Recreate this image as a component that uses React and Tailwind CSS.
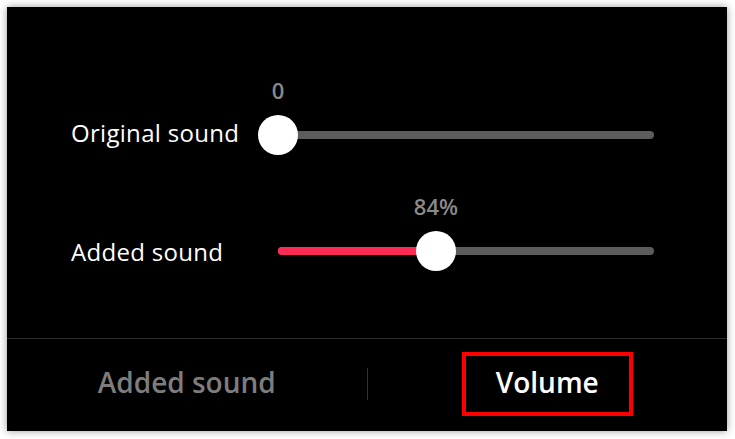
import React from "react";

const font = { fontFamily: '"Open Sans", "Liberation Sans", sans-serif' };

function Slider({ label, value, percent, color, lift }) {
  return (
    <div className="flex h-[40px] items-center">
      <div className={(lift ? "pb-[4px] " : "pt-[1px] ") + "w-[207px] text-[24px] leading-none tracking-[0.3px] text-white"}>
        {label}
      </div>
      <div className="relative h-[8px] flex-1 rounded-full bg-[#5c5c5c]">
        <div
          className="absolute left-0 top-0 h-[8px] rounded-full bg-[#fe2c55]"
          style={{ width: `${percent}%`, display: color ? "block" : "none" }}
        />
        <div
          className="absolute top-1/2 h-[40px] w-[40px] -translate-x-1/2 -translate-y-1/2 rounded-full bg-white"
          style={{ left: `${percent}%` }}
        />
        <div
          className="absolute top-[-56px] -translate-x-1/2 text-[22px] leading-[30px] font-semibold text-[#8a8a8a]"
          style={{ left: `${percent}%` }}
        >
          {value}
        </div>
      </div>
    </div>
  );
}

export default function App() {
  return (
    <div className="h-[439px] w-[735px] bg-white pl-[7px] pt-[7px]" style={font}>
      <div className="flex h-[424px] w-[720px] flex-col bg-black shadow-[0_0_8px_rgba(0,0,0,0.4)]">
        {/* sliders */}
        <div className="flex h-[331px] flex-col gap-[76px] pl-[64px] pr-[73px] pt-[108px]">
          <Slider label="Original sound" value="0" percent={0} lift />
          <Slider label="Added sound" value="84%" percent={42} color />
        </div>

        {/* tabs */}
        <div className="flex h-[93px] items-center border-t border-[#2b2b2b] pb-[3px]">
          <div className="flex flex-1 justify-center pb-[4px] text-[28px] font-semibold text-[#7d7d7d]">
            Added sound
          </div>
          <div className="h-[32px] w-px bg-[#333]" />
          <div className="flex flex-1 justify-center">
            <div className="flex h-[64px] w-[171px] items-center justify-center border-4 border-[#ff0000] pb-[3px] text-[28px] font-semibold text-white">
              Volume
            </div>
          </div>
        </div>
      </div>
    </div>
  );
}
